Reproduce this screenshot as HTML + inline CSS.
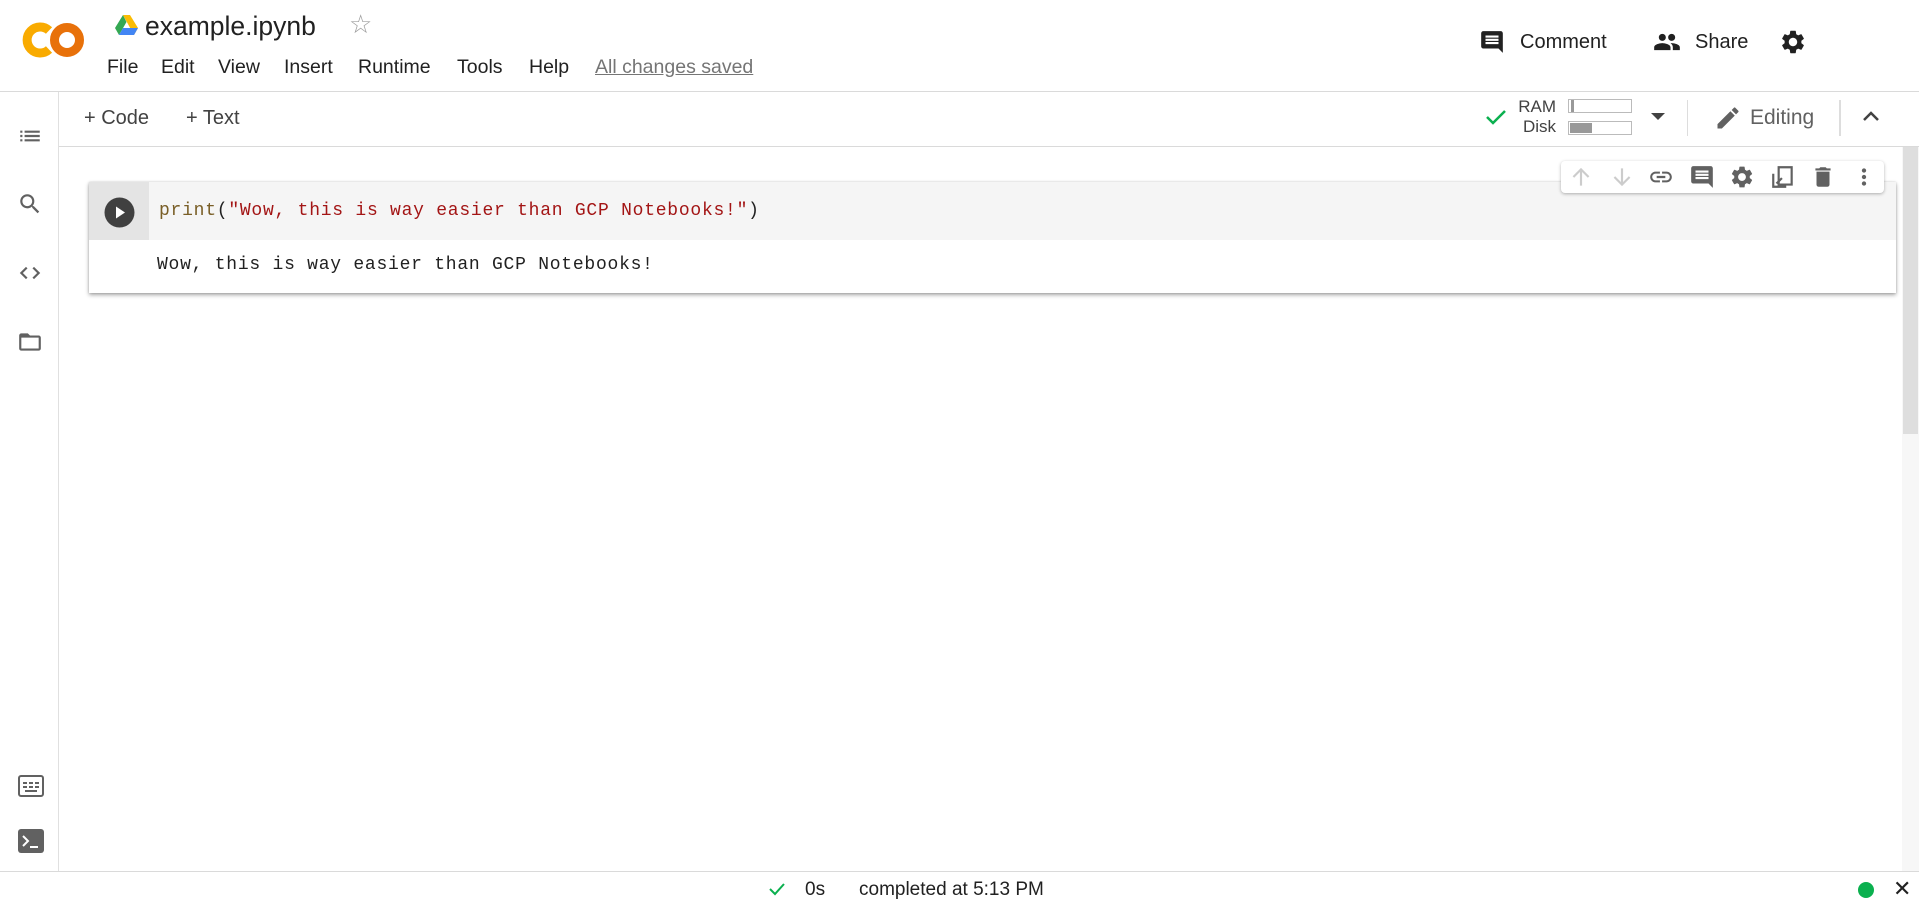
<!DOCTYPE html>
<html><head><meta charset="utf-8"><style>
*{margin:0;padding:0;box-sizing:border-box}
body{width:1919px;height:899px;overflow:hidden;background:#fff;font-family:"Liberation Sans",sans-serif;color:#212121;position:relative}
.a{position:absolute}
.menu span{position:absolute;top:56px;font-size:19.5px;color:#212121}
.mono{font-family:"Liberation Mono",monospace;font-size:18px;letter-spacing:0.75px}
svg{position:absolute}
</style></head><body>
<!-- logo -->
<svg style="left:20px;top:18px" width="66" height="44" viewBox="0 0 66 44">
<path d="M29 12.5 A13 13 0 1 0 29 31.5" fill="none" stroke="#f9ab00" stroke-width="9"/>
<circle cx="47" cy="22" r="12.5" fill="none" stroke="#e8710a" stroke-width="9"/>
</svg>
<svg style="left:115px;top:15px" width="23" height="20" viewBox="0 0 23 20">
<polygon points="8,0 15,0 23,13 19,20" fill="#fbbc04"/><polygon points="8,0 0,13 4,20 11.5,7" fill="#34a853"/><polygon points="4,20 19,20 23,13 8,13" fill="#4285f4"/>
</svg>
<div class="a" style="left:145px;top:11px;font-size:26.5px;color:#212121">example.ipynb</div>
<div class="a" style="left:349px;top:9px;font-size:26px;color:#9e9e9e">☆</div>
<div class="menu">
<span style="left:107px">File</span><span style="left:161px">Edit</span><span style="left:218px">View</span><span style="left:284px">Insert</span><span style="left:358px">Runtime</span><span style="left:457px">Tools</span><span style="left:529px">Help</span>
<span style="left:595px;color:#757575;text-decoration:underline">All changes saved</span>
</div>
<!-- header right -->
<svg style="left:1479px;top:29px" width="26" height="26" viewBox="0 0 24 24"><path fill="#212121" d="M21.99 4c0-1.1-.89-2-1.99-2H4c-1.1 0-2 .9-2 2v12c0 1.1.9 2 2 2h14l4 4-.01-18zM18 14H6v-2h12v2zm0-3H6V9h12v2zm0-3H6V6h12v2z"/></svg>
<div class="a" style="left:1520px;top:31px;font-size:20px">Comment</div>
<svg style="left:1652px;top:28px" width="30" height="28" viewBox="0 0 24 24"><path fill="#212121" d="M16 11c1.66 0 2.99-1.34 2.99-3S17.66 5 16 5c-1.66 0-3 1.34-3 3s1.34 3 3 3zm-8 0c1.66 0 2.99-1.34 2.99-3S9.66 5 8 5C6.34 5 5 6.34 5 8s1.34 3 3 3zm0 2c-2.33 0-7 1.170-7 3.5V19h14v-2.5c0-2.33-4.67-3.5-7-3.5zm8 0c-.29 0-.62.02-.97.05 1.16.84 1.97 1.97 1.97 3.45V19h6v-2.5c0-2.33-4.67-3.5-7-3.5z"/></svg>
<div class="a" style="left:1695px;top:31px;font-size:20px">Share</div>
<svg style="left:1779px;top:28px" width="28" height="28" viewBox="0 0 24 24"><path fill="#212121" d="M19.14 12.94c.04-.3.06-.61.06-.94 0-.32-.02-.64-.07-.94l2.03-1.58a.49.49 0 0 0 .12-.61l-1.92-3.32a.488.488 0 0 0-.59-.22l-2.39.96c-.5-.38-1.03-.7-1.62-.94l-.36-2.54a.484.484 0 0 0-.48-.41h-3.84c-.24 0-.43.17-.47.41l-.36 2.54c-.59.24-1.13.57-1.62.94l-2.39-.96c-.22-.08-.47 0-.59.22L2.74 8.87c-.12.21-.08.47.12.61l2.03 1.58c-.05.3-.09.63-.09.94s.02.64.07.94l-2.03 1.58a.49.49 0 0 0-.12.61l1.92 3.32c.12.22.37.29.59.22l2.39-.96c.5.38 1.03.7 1.62.94l.36 2.54c.05.24.24.41.48.41h3.84c.24 0 .44-.17.47-.41l.36-2.54c.59-.24 1.13-.56 1.62-.94l2.39.96c.22.08.47 0 .59-.22l1.92-3.32c.12-.22.07-.47-.12-.61l-2.01-1.58zM12 15.6c-1.98 0-3.6-1.62-3.6-3.6s1.62-3.6 3.6-3.6 3.6 1.62 3.6 3.6-1.62 3.6-3.6 3.6z"/></svg>
<div class="a" style="left:0;top:91px;width:1919px;height:1px;background:#dadada"></div>
<!-- sidebar -->
<div class="a" style="left:58px;top:92px;width:1px;height:779px;background:#e0e0e0"></div>
<svg style="left:17px;top:123px" width="26" height="26" viewBox="0 0 24 24"><path fill="#616161" d="M3 13h2v-2H3v2zm0 4h2v-2H3v2zm0-8h2V7H3v2zm4 4h14v-2H7v2zm0 4h14v-2H7v2zM7 7v2h14V7H7z"/></svg>
<svg style="left:17px;top:191px" width="26" height="26" viewBox="0 0 24 24"><path fill="#616161" d="M15.5 14h-.79l-.28-.27A6.47 6.47 0 0 0 16 9.5 6.5 6.5 0 1 0 9.5 16c1.61 0 3.09-.59 4.23-1.57l.27.28v.79l5 4.99L20.49 19l-4.99-5zm-6 0C7.01 14 5 11.99 5 9.5S7.01 5 9.5 5 14 7.01 14 9.5 11.99 14 9.5 14z"/></svg>
<svg style="left:17px;top:260px" width="26" height="26" viewBox="0 0 24 24"><path fill="none" stroke="#616161" stroke-width="2" d="M9 7l-5 5 5 5M15 7l5 5-5 5"/></svg>
<svg style="left:17px;top:329px" width="26" height="26" viewBox="0 0 24 24"><path fill="#616161" d="M20 6h-8l-2-2H4c-1.1 0-2 .9-2 2v12c0 1.1.9 2 2 2h16c1.1 0 2-.9 2-2V8c0-1.1-.9-2-2-2zm0 12H4V8h16v10z"/></svg>
<svg style="left:18px;top:775px" width="26" height="22" viewBox="0 0 26 22"><rect x="1" y="1" width="24" height="20" rx="2" fill="none" stroke="#616161" stroke-width="2"/><path d="M5 8h4M11 8h4M17 8h4M5 12h4M11 12h4M17 12h4M7 16h12" stroke="#616161" stroke-width="2"/></svg>
<svg style="left:18px;top:829px" width="26" height="24" viewBox="0 0 26 24"><rect width="26" height="24" rx="3" fill="#616161"/><path d="M5 7l5 5-5 5" stroke="#fff" stroke-width="2" fill="none"/><path d="M12 18h8" stroke="#fff" stroke-width="2"/></svg>
<!-- toolbar -->
<div class="a" style="left:84px;top:107px;font-size:20px;color:#424242">+ Code</div>
<div class="a" style="left:186px;top:107px;font-size:20px;color:#424242">+ Text</div>
<svg style="left:1484px;top:105px" width="24" height="24" viewBox="0 0 24 24"><path d="M3 12l6 6L21 6" stroke="#0bb04f" stroke-width="2.5" fill="none"/></svg>
<div class="a" style="left:1518px;top:97px;font-size:17px;color:#424242;line-height:20px;text-align:right;width:38px">RAM<br>Disk</div>
<div class="a" style="left:1568px;top:99px;width:64px;height:14px;border:1px solid #bbb"><div style="width:3px;height:100%;background:#999;margin-left:2px"></div></div>
<div class="a" style="left:1568px;top:121px;width:64px;height:14px;border:1px solid #bbb"><div style="width:22px;height:10px;background:#999;margin:1px"></div></div>
<svg style="left:1651px;top:113px" width="14" height="8"><path d="M0 0h14L7 7z" fill="#424242"/></svg>
<div class="a" style="left:1687px;top:100px;width:1px;height:36px;background:#ddd"></div>
<svg style="left:1714px;top:104px" width="28" height="28" viewBox="0 0 24 24"><path fill="#616161" d="M3 17.25V21h3.75L17.81 9.94l-3.75-3.75L3 17.25zM20.71 7.04a1 1 0 0 0 0-1.41l-2.34-2.34a1 1 0 0 0-1.41 0l-1.83 1.83 3.75 3.75 1.83-1.83z"/></svg>
<div class="a" style="left:1750px;top:106px;font-size:21px;color:#616161">Editing</div>
<div class="a" style="left:1839px;top:100px;width:2px;height:36px;background:#ddd"></div>
<svg style="left:1862px;top:110px" width="18" height="12"><path d="M2 10l7-7 7 7" stroke="#424242" stroke-width="2.5" fill="none"/></svg>
<div class="a" style="left:59px;top:146px;width:1860px;height:1px;background:#dadada"></div>
<!-- scrollbar -->
<div class="a" style="left:1902px;top:147px;width:17px;height:724px;background:#f7f7f7"></div>
<div class="a" style="left:1903px;top:147px;width:15px;height:287px;background:#dedede"></div>
<!-- cell -->
<div class="a" style="left:89px;top:182px;width:1807px;height:111px;background:#fff;box-shadow:0 2px 4px rgba(0,0,0,.35),0 0 2px rgba(0,0,0,.15)"></div>
<div class="a" style="left:89px;top:182px;width:1807px;height:58px;background:#f5f5f5"></div>
<div class="a" style="left:89px;top:182px;width:60px;height:58px;background:#e4e4e4"></div>
<svg style="left:104px;top:197px" width="31" height="31"><circle cx="15.5" cy="15.5" r="15" fill="#404040"/><path d="M12 9.5l9 6-9 6z" fill="#fff"/></svg>
<div class="a mono" style="left:159px;top:201px;color:#795e26">print<span style="color:#212121">(</span><span style="color:#a31515">"Wow, this is way easier than GCP Notebooks!"</span><span style="color:#212121">)</span></div>
<div class="a mono" style="left:157px;top:255px;color:#212121">Wow, this is way easier than GCP Notebooks!</div>
<!-- cell toolbar -->
<div class="a" style="left:1561px;top:161px;width:323px;height:32px;background:#fff;border-radius:4px;box-shadow:0 1px 3px rgba(0,0,0,.3)"></div>
<svg style="left:1568px;top:164px" width="26" height="26" viewBox="0 0 24 24"><path d="M12 20V5M5 12l7-7 7 7" stroke="#ccc" stroke-width="2" fill="none"/></svg>
<svg style="left:1609px;top:164px" width="26" height="26" viewBox="0 0 24 24"><path d="M12 4v15M5 12l7 7 7-7" stroke="#ccc" stroke-width="2" fill="none"/></svg>
<svg style="left:1648px;top:164px" width="26" height="26" viewBox="0 0 24 24"><path fill="#616161" d="M3.9 12c0-1.71 1.39-3.1 3.1-3.1h4V7H7c-2.76 0-5 2.24-5 5s2.24 5 5 5h4v-1.9H7c-1.71 0-3.1-1.39-3.1-3.1zM8 13h8v-2H8v2zm9-6h-4v1.9h4c1.71 0 3.1 1.39 3.1 3.1s-1.39 3.1-3.1 3.1h-4V17h4c2.76 0 5-2.24 5-5s-2.24-5-5-5z"/></svg>
<svg style="left:1689px;top:164px" width="26" height="26" viewBox="0 0 24 24"><path fill="#616161" d="M21.99 4c0-1.1-.89-2-1.99-2H4c-1.1 0-2 .9-2 2v12c0 1.1.9 2 2 2h14l4 4-.01-18zM18 14H6v-2h12v2zm0-3H6V9h12v2zm0-3H6V6h12v2z"/></svg>
<svg style="left:1729px;top:164px" width="26" height="26" viewBox="0 0 24 24"><path fill="#616161" d="M19.14 12.94c.04-.3.06-.61.06-.94 0-.32-.02-.64-.07-.94l2.03-1.58a.49.49 0 0 0 .12-.61l-1.92-3.32a.488.488 0 0 0-.59-.22l-2.39.96c-.5-.38-1.03-.7-1.62-.94l-.36-2.54a.484.484 0 0 0-.48-.41h-3.84c-.24 0-.43.17-.47.41l-.36 2.54c-.59.24-1.13.57-1.62.94l-2.39-.96c-.22-.08-.47 0-.59.22L2.74 8.87c-.12.21-.08.47.12.61l2.03 1.58c-.05.3-.09.63-.09.94s.02.64.07.94l-2.03 1.58a.49.49 0 0 0-.12.61l1.92 3.32c.12.22.37.29.59.22l2.39-.96c.5.38 1.03.7 1.62.94l.36 2.54c.05.24.24.41.48.41h3.84c.24 0 .44-.17.47-.41l.36-2.54c.59-.24 1.13-.56 1.62-.94l2.39.96c.22.08.47 0 .59-.22l1.92-3.32c.12-.22.07-.47-.12-.61l-2.01-1.58zM12 15.6c-1.98 0-3.6-1.62-3.6-3.6s1.62-3.6 3.6-3.6 3.6 1.62 3.6 3.6-1.62 3.6-3.6 3.6z"/></svg>
<svg style="left:1770px;top:164px" width="26" height="26" viewBox="0 0 24 24"><path d="M8 3h12v16H8zM3 9v12h12" stroke="#616161" stroke-width="2" fill="none"/><path d="M6 18l5-5" stroke="#616161" stroke-width="2"/></svg>
<svg style="left:1810px;top:164px" width="26" height="26" viewBox="0 0 24 24"><path fill="#616161" d="M6 19c0 1.1.9 2 2 2h8c1.1 0 2-.9 2-2V7H6v12zM19 4h-3.5l-1-1h-5l-1 1H5v2h14V4z"/></svg>
<svg style="left:1851px;top:164px" width="26" height="26" viewBox="0 0 24 24"><circle cx="12" cy="6" r="2" fill="#616161"/><circle cx="12" cy="12" r="2" fill="#616161"/><circle cx="12" cy="18" r="2" fill="#616161"/></svg>
<!-- footer -->
<div class="a" style="left:0;top:871px;width:1919px;height:1px;background:#dadada"></div>
<svg style="left:768px;top:881px" width="18" height="16" viewBox="0 0 18 16"><path d="M2 8l5 5L16 3" stroke="#0bb04f" stroke-width="2" fill="none"/></svg>
<div class="a" style="left:805px;top:879px;font-size:19px;color:#212121">0s</div>
<div class="a" style="left:859px;top:879px;font-size:19px;color:#212121">completed at 5:13 PM</div>
<div class="a" style="left:1858px;top:882px;width:16px;height:16px;border-radius:50%;background:#0bb04f"></div>
<div class="a" style="left:1893px;top:876px;font-size:22px;color:#212121">✕</div>
</body></html>
